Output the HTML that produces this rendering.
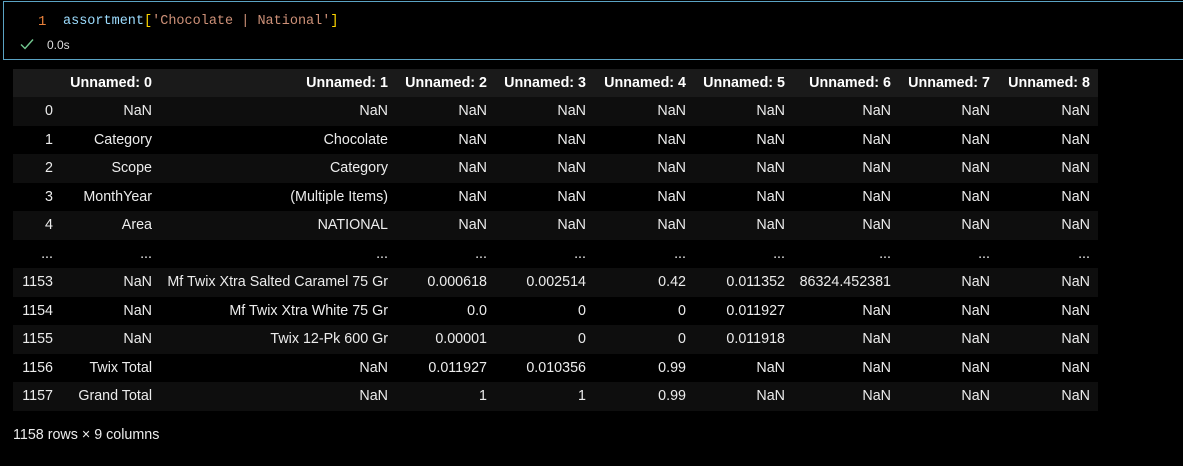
<!DOCTYPE html>
<html><head><meta charset="utf-8"><style>
html,body{margin:0;padding:0;background:#000;width:1183px;height:466px;overflow:hidden}
body{font-family:"Liberation Sans",sans-serif;color:#ececec;position:relative}
.cell{position:absolute;left:3px;top:1px;width:1190px;height:57px;border:1px solid #5aa3c4;}
.code{position:absolute;left:36px;top:14px;font-family:"Liberation Mono",monospace;font-size:13.5px;color:#9cdcfe}
.ln{position:absolute;left:38px;top:14px;font-family:"Liberation Mono",monospace;font-size:14px;color:#e8803a}
.chk{position:absolute;left:20px;top:38px}
.time{position:absolute;left:47px;top:38px;font-size:12px;color:#ddd}
table{position:absolute;left:13px;top:69px;border-collapse:collapse;table-layout:fixed;font-size:14.3px}
td,th{height:28.5px;padding:0 8px 0 0;text-align:right;white-space:nowrap;overflow:hidden}
th{font-weight:bold;color:#fff;background:#1a1a1a;height:28px}
tr:nth-child(even) td{background:#0e0e0e}
.foot{position:absolute;left:13px;top:427px;font-size:14.3px}
</style></head><body>
<div class="cell"></div>
<div class="ln">1</div>
<div class="code" style="left:63px">assortment<span style="color:#ffd700">[</span><span style="color:#ce9178">'Chocolate | National'</span><span style="color:#ffd700">]</span></div>
<svg class="chk" width="14" height="12" viewBox="0 0 14 12"><path d="M1 6.5 L5 10.5 L13 1.5" stroke="#73c991" stroke-width="1.4" fill="none"/></svg>
<div class="time">0.0s</div>
<table>
<colgroup><col style="width:48px"><col style="width:99px"><col style="width:236px"><col style="width:99px"><col style="width:99px"><col style="width:100px"><col style="width:99px"><col style="width:106px"><col style="width:99px"><col style="width:100px"></colgroup>
<tr><th></th><th>Unnamed: 0</th><th>Unnamed: 1</th><th>Unnamed: 2</th><th>Unnamed: 3</th><th>Unnamed: 4</th><th>Unnamed: 5</th><th>Unnamed: 6</th><th>Unnamed: 7</th><th>Unnamed: 8</th></tr>
<tr><td>0</td><td>NaN</td><td>NaN</td><td>NaN</td><td>NaN</td><td>NaN</td><td>NaN</td><td>NaN</td><td>NaN</td><td>NaN</td></tr>
<tr><td>1</td><td>Category</td><td>Chocolate</td><td>NaN</td><td>NaN</td><td>NaN</td><td>NaN</td><td>NaN</td><td>NaN</td><td>NaN</td></tr>
<tr><td>2</td><td>Scope</td><td>Category</td><td>NaN</td><td>NaN</td><td>NaN</td><td>NaN</td><td>NaN</td><td>NaN</td><td>NaN</td></tr>
<tr><td>3</td><td>MonthYear</td><td>(Multiple Items)</td><td>NaN</td><td>NaN</td><td>NaN</td><td>NaN</td><td>NaN</td><td>NaN</td><td>NaN</td></tr>
<tr><td>4</td><td>Area</td><td>NATIONAL</td><td>NaN</td><td>NaN</td><td>NaN</td><td>NaN</td><td>NaN</td><td>NaN</td><td>NaN</td></tr>
<tr><td>...</td><td>...</td><td>...</td><td>...</td><td>...</td><td>...</td><td>...</td><td>...</td><td>...</td><td>...</td></tr>
<tr><td>1153</td><td>NaN</td><td>Mf Twix Xtra Salted Caramel 75 Gr</td><td>0.000618</td><td>0.002514</td><td>0.42</td><td>0.011352</td><td>86324.452381</td><td>NaN</td><td>NaN</td></tr>
<tr><td>1154</td><td>NaN</td><td>Mf Twix Xtra White 75 Gr</td><td>0.0</td><td>0</td><td>0</td><td>0.011927</td><td>NaN</td><td>NaN</td><td>NaN</td></tr>
<tr><td>1155</td><td>NaN</td><td>Twix 12-Pk 600 Gr</td><td>0.00001</td><td>0</td><td>0</td><td>0.011918</td><td>NaN</td><td>NaN</td><td>NaN</td></tr>
<tr><td>1156</td><td>Twix Total</td><td>NaN</td><td>0.011927</td><td>0.010356</td><td>0.99</td><td>NaN</td><td>NaN</td><td>NaN</td><td>NaN</td></tr>
<tr><td>1157</td><td>Grand Total</td><td>NaN</td><td>1</td><td>1</td><td>0.99</td><td>NaN</td><td>NaN</td><td>NaN</td><td>NaN</td></tr>
</table>
<div class="foot">1158 rows × 9 columns</div>
</body></html>
